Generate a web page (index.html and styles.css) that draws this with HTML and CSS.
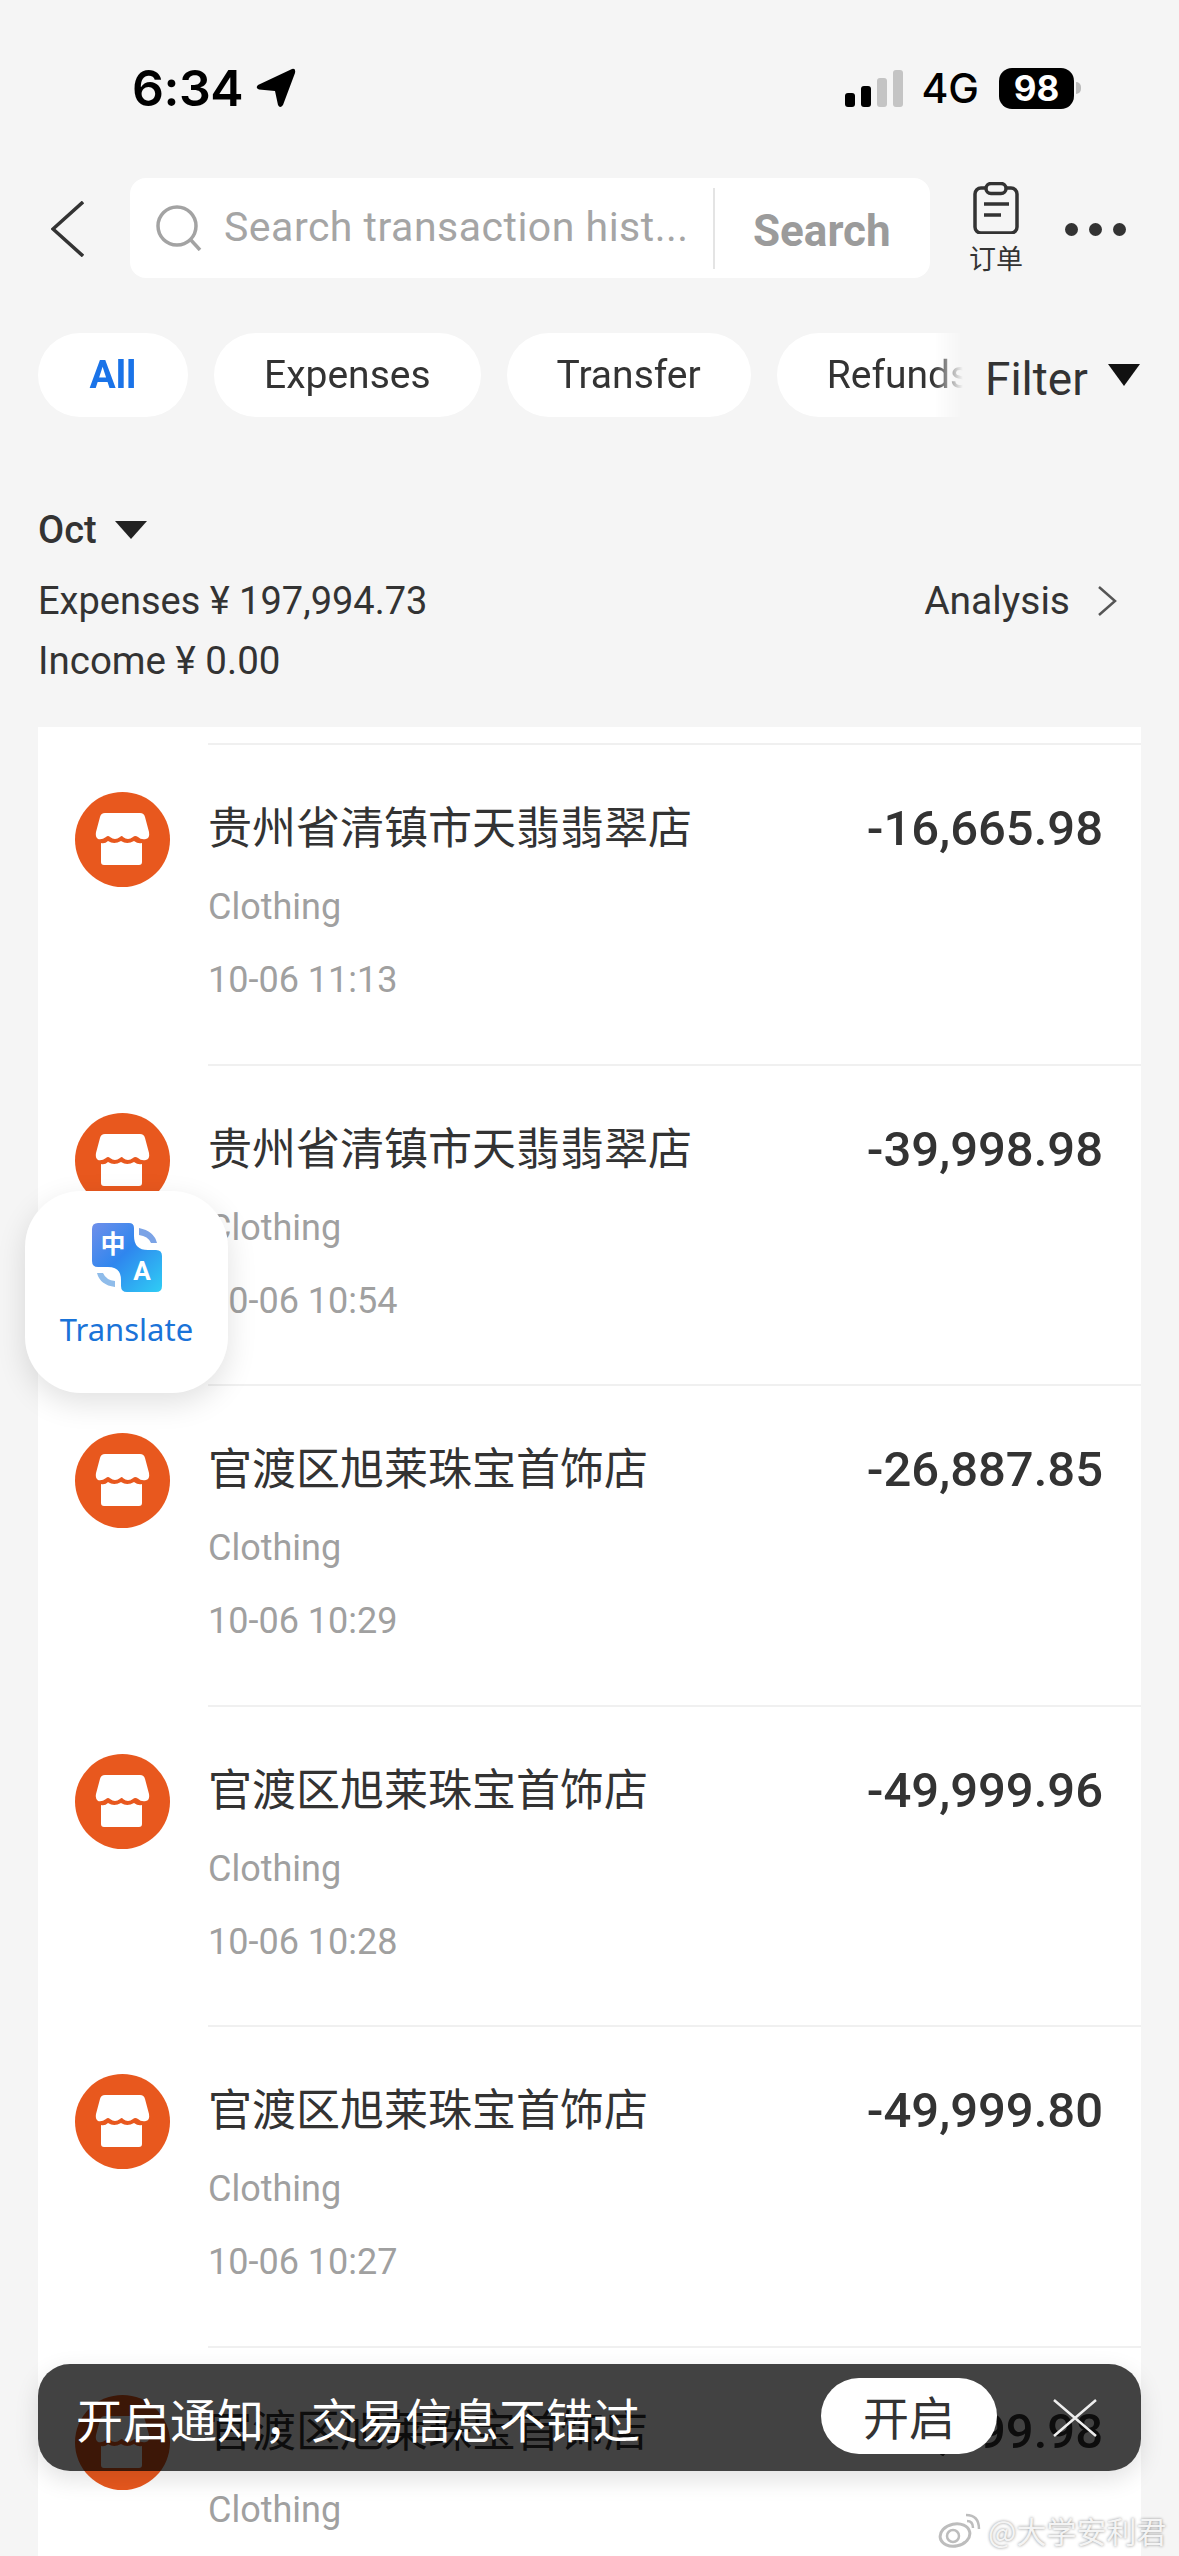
FILE: index.html
```html
<!DOCTYPE html>
<html lang="en">
<head>
    <meta charset="UTF-8">
    <meta name="viewport" content="width=device-width, initial-scale=1.0">
    <title>Transaction history</title>
    <link rel="stylesheet" href="styles.css">
</head>
<body>

    <svg class="defs" width="0" height="0">
        <symbol id="store" viewBox="0 0 95 95">
            <circle cx="47.5" cy="47.5" r="47.5" fill="#e8581e"/>
            <path fill="#fff" d="M30 21H65Q69 21 70 25L74 40Q75 46 71 47Q66 48 63 45Q60 43 58 45Q53 49 48 45Q47 43 45 45Q40 49 35 45Q33 43 31 45Q27 48 23 47Q20 45 21 40L25 25Q26 21 30 21Z"/>
            <path fill="#fff" d="M26 51Q30 52 33 49Q39 53 46 49Q52 53 59 49Q63 52 67 51V70Q67 73 64 73H29Q26 73 26 70Z"/>
        </symbol>
    </svg>

    <div class="status">
        <span class="time">6:34</span>
        <svg class="arrow" width="40" height="40" viewBox="0 0 40 40"><path fill="#000" d="M36 1L2 17Q-1 20 3 21.500L19 23L22 37Q24 41 27 37L39 5Q40 0 36 1Z"/></svg>
        <div class="status-right">
            <div class="signal">
                <span class="bar bar1"></span>
                <span class="bar bar2"></span>
                <span class="bar bar3"></span>
                <span class="bar bar4"></span>
            </div>
            <span class="net">4G</span>
            <span class="battery">98</span>
            <span class="nub"></span>
        </div>
    </div>

    <div class="header">
        <svg class="back" width="33" height="56" viewBox="0 0 33 56"><path fill="none" stroke="#333" stroke-width="3.500" d="M32 1L2 28L32 55"/></svg>
        <div class="search-box">
            <svg class="search-icon" width="48" height="46" viewBox="0 0 48 46"><circle cx="22" cy="21" r="19" fill="none" stroke="#a3a3a3" stroke-width="3.500"/><path stroke="#a3a3a3" stroke-width="3.500" d="M35 34L45 45"/></svg>
            <span class="placeholder"><span class="placeholder-text">Search transaction hist...</span></span>
            <span class="search-btn">Search</span>
        </div>
        <div class="orders">
            <svg width="52" height="52" viewBox="0 0 52 52"><rect x="5" y="6" width="42" height="45" rx="6" fill="none" stroke="#333" stroke-width="3.500"/><rect x="16" y="1.500" width="20" height="10" rx="5" fill="#f5f5f5" stroke="#333" stroke-width="3.500"/><path stroke="#333" stroke-width="3.500" d="M14 22H39M14 33H31"/></svg>
            <span class="orders-label">订单</span>
        </div>
        <div class="dots"><span></span><span></span><span></span></div>
    </div>

    <div class="tabs">
        <div class="tab-scroll">
            <span class="tab active">All</span>
            <span class="tab">Expenses</span>
            <span class="tab">Transfer</span>
            <span class="tab">Refunds</span>
        </div>
        <div class="filter">Filter<span class="tri"></span></div>
    </div>

    <div class="summary">
        <div class="month">Oct<span class="tri small"></span></div>
        <div class="summary-row">
            <span>Expenses ¥ 197,994.73</span>
            <span class="analysis">Analysis
                <svg width="20" height="30" viewBox="0 0 20 30"><path fill="none" stroke="#555" stroke-width="2.500" d="M2 1L18 15L2 29"/></svg>
            </span>
        </div>
        <div class="income">Income ¥ 0.00</div>
    </div>

    <div class="list">
        <div class="row">
            <svg class="shop" width="95" height="95"><use href="#store"/></svg>
            <div class="row-body">
                <div class="row-head">
                    <span class="title">贵州省清镇市天翡翡翠店</span>
                    <span class="amount">-16,665.98</span>
                </div>
                <div class="cat">Clothing</div>
                <div class="date">10-06 11:13</div>
            </div>
        </div>
        <div class="row">
            <svg class="shop" width="95" height="95"><use href="#store"/></svg>
            <div class="row-body">
                <div class="row-head">
                    <span class="title">贵州省清镇市天翡翡翠店</span>
                    <span class="amount">-39,998.98</span>
                </div>
                <div class="cat">Clothing</div>
                <div class="date">10-06 10:54</div>
            </div>
        </div>
        <div class="row">
            <svg class="shop" width="95" height="95"><use href="#store"/></svg>
            <div class="row-body">
                <div class="row-head">
                    <span class="title">官渡区旭莱珠宝首饰店</span>
                    <span class="amount">-26,887.85</span>
                </div>
                <div class="cat">Clothing</div>
                <div class="date">10-06 10:29</div>
            </div>
        </div>
        <div class="row">
            <svg class="shop" width="95" height="95"><use href="#store"/></svg>
            <div class="row-body">
                <div class="row-head">
                    <span class="title">官渡区旭莱珠宝首饰店</span>
                    <span class="amount">-49,999.96</span>
                </div>
                <div class="cat">Clothing</div>
                <div class="date">10-06 10:28</div>
            </div>
        </div>
        <div class="row">
            <svg class="shop" width="95" height="95"><use href="#store"/></svg>
            <div class="row-body">
                <div class="row-head">
                    <span class="title">官渡区旭莱珠宝首饰店</span>
                    <span class="amount">-49,999.80</span>
                </div>
                <div class="cat">Clothing</div>
                <div class="date">10-06 10:27</div>
            </div>
        </div>
        <div class="row">
            <svg class="shop" width="95" height="95"><use href="#store"/></svg>
            <div class="row-body">
                <div class="row-head">
                    <span class="title">官渡区旭莱珠宝首饰店</span>
                    <span class="amount">-49,999.98</span>
                </div>
                <div class="cat">Clothing</div>
            </div>
        </div>
    </div>

    <div class="translate">
        <svg width="70" height="70" viewBox="0 0 70 70">
            <defs>
                <linearGradient id="tg" x1="0" y1="0" x2="1" y2="1">
                    <stop offset="0" stop-color="#6f8fea"/>
                    <stop offset="0.45" stop-color="#2f86ee"/>
                    <stop offset="1" stop-color="#2fcdf5"/>
                </linearGradient>
            </defs>
            <path fill="url(#tg)" d="M6 0H37Q42 0 42 5V13Q42 27 56 27H64Q70 27 70 33V63Q70 69 64 69H35Q29 69 29 63V57Q29 44 16 44H6Q0 44 0 38V6Q0 0 6 0Z"/>
            <path fill="#7ba3e6" d="M47 5Q62 8 65 20H59Q56 13 47 12Z"/>
            <path fill="#8fbcea" d="M5 50H11Q14 57 23 58V64Q8 62 5 50Z"/>
            <text x="21" y="30" class="t-zh">中</text>
            <text x="50" y="57" class="t-en">A</text>
        </svg>
        <span class="translate-label">Translate</span>
    </div>

    <div class="toast">
        <span class="toast-text">开启通知，交易信息不错过</span>
        <span class="toast-btn">开启</span>
        <svg class="toast-close" width="44" height="38" viewBox="0 0 44 38"><path stroke="#eee" stroke-width="2.500" d="M1 1L43 37M43 1L1 37"/></svg>
    </div>

    <div class="watermark">
        <svg width="44" height="36" viewBox="0 0 44 36">
            <ellipse cx="17" cy="23" rx="15" ry="11" fill="#fff" stroke="#bdbdbd" stroke-width="3" transform="rotate(-12 17 23)"/>
            <circle cx="15" cy="24" r="6" fill="none" stroke="#bdbdbd" stroke-width="2.500"/>
            <path fill="none" stroke="#bdbdbd" stroke-width="2.500" d="M28 3Q41 3 41 17M29 9Q35 9 35 16"/>
        </svg>
        <span>@大学安利君</span>
    </div>

</body>
</html>
```

FILE: styles.css
```css
* {
    box-sizing: border-box;
}
html, body {
    margin: 0;
    height: 2556px;
    overflow: hidden;
}
body {
    position: relative;
    background-color: #f5f5f5;
    color: #333;
    font-family: Roboto, "Noto Sans CJK SC", sans-serif;
}
.defs {
    position: absolute;
}

/* status bar */
.status {
    display: flex;
    align-items: center;
    height: 56px;
    margin-top: 60px;
    padding-left: 132px;
    color: #000;
    font-family: Inter, sans-serif;
}
.time {
    font-size: 50px;
    font-weight: 600;
    letter-spacing: -0.5px;
}
.arrow {
    margin-left: 13px;
}
.status-right {
    display: flex;
    align-items: center;
    margin-left: auto;
    padding-right: 98px;
}
.signal {
    display: flex;
    align-items: flex-end;
    gap: 6px;
    height: 37px;
}
.bar {
    width: 10px;
    border-radius: 3px;
    background: #000;
}
.bar1 {
    height: 14px;
}
.bar2 {
    height: 21px;
}
.bar3 {
    height: 29px;
    background: #c4c4c4;
}
.bar4 {
    height: 37px;
    background: #c4c4c4;
}
.net {
    margin-left: 18px;
    font-size: 41px;
    font-weight: 500;
}
.battery {
    width: 75px;
    height: 41px;
    margin-left: 20px;
    border-radius: 13px;
    background: #000;
    color: #fff;
    font-size: 35px;
    font-weight: 700;
    line-height: 41px;
    text-align: center;
}
.nub {
    width: 5px;
    height: 12px;
    margin-left: 2px;
    border-radius: 0 6px 6px 0;
    background: #bbb;
}

/* search row */
.header {
    display: flex;
    align-items: center;
    height: 100px;
    margin-top: 62px;
    padding-left: 51px;
}
.back {
    margin-top: 2px;
}
.search-box {
    display: flex;
    align-items: center;
    width: 800px;
    height: 100px;
    margin-left: 46px;
    padding-left: 25px;
    border-radius: 16px;
    background: #fff;
}
.placeholder {
    width: 491px;
    margin-left: 21px;
    border-right: 2px solid #e4e4e4;
    line-height: 72px;
    white-space: nowrap;
}
.placeholder-text {
    position: relative;
    top: 3px;
    color: #a5a5a5;
    font-size: 41px;
    letter-spacing: 0.5px;
}
.search-btn {
    margin-left: 38px;
    margin-top: 5px;
    color: #9b9b9b;
    font-size: 44px;
    font-weight: 700;
}
.orders {
    display: flex;
    flex-direction: column;
    align-items: center;
    align-self: flex-start;
    width: 56px;
    margin-left: 38px;
    padding-top: 4px;
}
.orders-label {
    margin-top: 9px;
    font-size: 27px;
    line-height: 34px;
}
.dots {
    display: flex;
    gap: 11px;
    margin-left: 41px;
    margin-top: 2px;
}
.dots span {
    width: 13px;
    height: 13px;
    border-radius: 50%;
    background: #333;
}

/* tabs */
.tabs {
    display: flex;
    align-items: center;
    height: 84px;
    margin-top: 55px;
    padding-left: 38px;
}
.tab-scroll {
    display: flex;
    gap: 26px;
    width: 945px;
    overflow: hidden;
    -webkit-mask-image: linear-gradient(to right, #000 895px, transparent 925px);
    mask-image: linear-gradient(to right, #000 895px, transparent 925px);
}
.tab {
    flex: none;
    height: 84px;
    padding: 0 50px;
    border-radius: 42px;
    background: #fff;
    font-size: 39px;
    line-height: 84px;
}
.tab.active {
    width: 150px;
    color: #1a73e8;
    font-weight: 700;
    text-align: center;
}
.filter {
    display: flex;
    align-items: center;
    margin-left: 2px;
    margin-top: 8px;
    font-size: 46px;
    line-height: 84px;
}
.tri {
    width: 0;
    height: 0;
    margin-left: 20px;
    margin-top: -8px;
    border-left: 16px solid transparent;
    border-right: 16px solid transparent;
    border-top: 22px solid #111;
}
.tri.small {
    margin-top: 0;
    margin-left: 18px;
    border-top: 18px solid #222;
}

/* month summary */
.summary {
    padding: 90px 62px 0 38px;
    font-size: 38px;
}
.month {
    display: flex;
    align-items: center;
    font-weight: 500;
    line-height: 46px;
}
.summary-row {
    display: flex;
    justify-content: space-between;
    margin-top: 23px;
    line-height: 50px;
}
.analysis {
    display: flex;
    align-items: center;
    gap: 27px;
    font-size: 39px;
}
.income {
    margin-top: 10px;
    line-height: 50px;
    font-size: 38.500px;
}

/* transaction list */
.list {
    margin: 41px 38px 0;
    padding-top: 16px;
    background: #fff;
}
.row {
    display: flex;
    height: 320.600px;
}
.shop {
    flex: none;
    margin: 49px 38px 0 37px;
}
.row-body {
    flex: 1;
    padding: 54px 38px 0 0;
    border-top: 2px solid #f0f0f0;
}
.row-head {
    display: flex;
    justify-content: space-between;
    line-height: 60px;
}
.title {
    font-size: 44px;
}
.amount {
    font-size: 49px;
    font-weight: 500;
}
.cat {
    margin-top: 23px;
    color: #a0a0a0;
    font-size: 36px;
    line-height: 50px;
}
.date {
    margin-top: 23px;
    color: #a0a0a0;
    font-size: 36px;
    line-height: 50px;
}

/* floating things over the list */
.translate {
    position: absolute;
    left: 25px;
    top: 1191px;
    display: flex;
    flex-direction: column;
    align-items: center;
    width: 203px;
    height: 202px;
    padding-top: 32px;
    border-radius: 56px;
    background: #fff;
    box-shadow: 0 10px 30px rgba(0, 0, 0, 0.12);
}
.t-zh {
    fill: #fff;
    font-size: 25px;
    font-weight: 700;
    font-family: "Noto Sans CJK SC", sans-serif;
    text-anchor: middle;
}
.t-en {
    fill: #fff;
    font-size: 26px;
    font-weight: 700;
    font-family: Roboto, sans-serif;
    text-anchor: middle;
}
.translate-label {
    margin-top: 16px;
    color: #1a73d8;
    font-family: "Noto Sans", sans-serif;
    font-size: 31px;
    line-height: 40px;
}
.toast {
    position: absolute;
    left: 38px;
    top: 2364px;
    display: flex;
    align-items: center;
    width: 1103px;
    height: 107px;
    padding-left: 38px;
    border-radius: 32px;
    background: rgba(0, 0, 0, 0.74);
    box-shadow: 0 8px 24px rgba(0, 0, 0, 0.12);
}
.toast-text {
    width: 745px;
    margin-top: -1px;
    color: #fff;
    font-size: 47px;
    white-space: nowrap;
}
.toast-btn {
    width: 176px;
    height: 76px;
    margin-top: -3px;
    border-radius: 38px;
    background: #fff;
    color: #333;
    font-size: 46px;
    line-height: 82px;
    text-align: center;
}
.toast-close {
    margin-left: 56px;
}
.watermark {
    position: absolute;
    left: 938px;
    top: 2510px;
    display: flex;
    align-items: center;
    gap: 6px;
    color: #f4f4f4;
    font-family: "Noto Sans CJK SC", sans-serif;
    font-size: 30px;
    line-height: 40px;
    white-space: nowrap;
    text-shadow: 0 0 3px #8a8a8a;
}
```
